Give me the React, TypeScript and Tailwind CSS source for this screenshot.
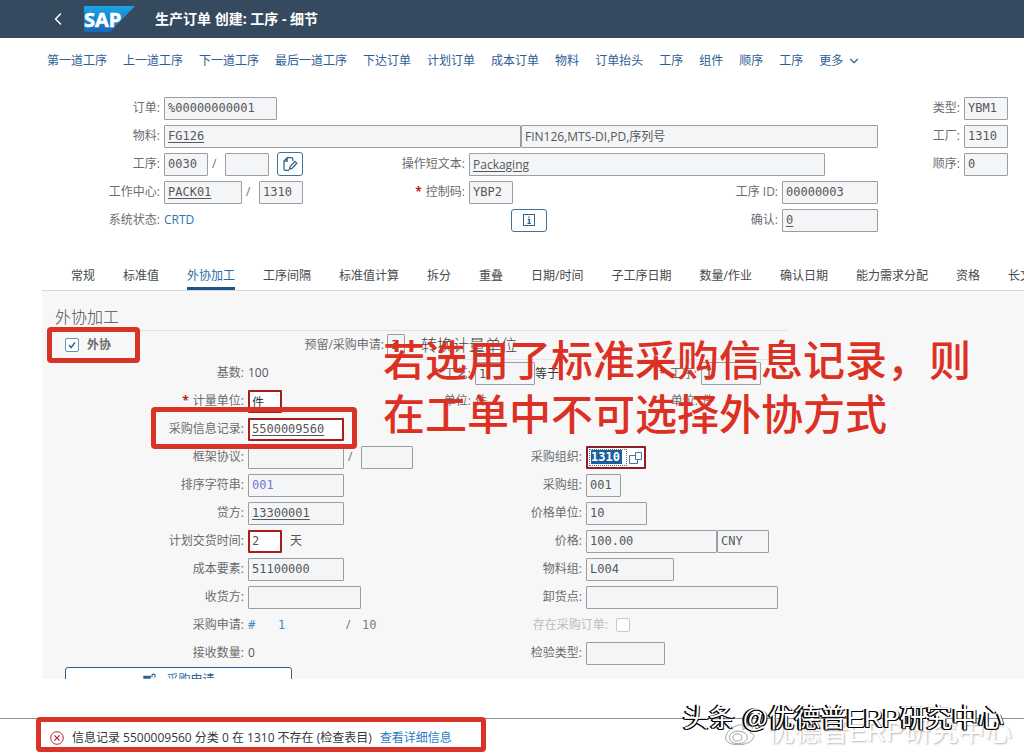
import React from "react";
import { ChevronDown, ChevronLeft } from "lucide-react";

const MENU = [
  "第一道工序", "上一道工序", "下一道工序", "最后一道工序", "下达订单", "计划订单", "成本订单",
  "物料", "订单抬头", "工序", "组件", "顺序", "工序",
];

const TABS = [
  "常规", "标准值", "外协加工", "工序间隔", "标准值计算", "拆分", "重叠", "日期/时间",
  "子工序日期", "数量/作业", "确认日期", "能力需求分配", "资格", "长文本",
];

const MONO = "font-['DejaVu_Sans_Mono','Noto_Sans_CJK_SC',monospace]";

function Label({ id, width, children, required = false, tone = "text-[#6a6d70]" }: {
  id?: string; width: string; children: React.ReactNode; required?: boolean; tone?: string;
}) {
  return (
    <label htmlFor={id} className={`shrink-0 text-right whitespace-nowrap ${width} ${tone}`}>
      {required && <span className="mr-1 font-bold text-[#bb2222]">*</span>}
      {children}:
    </label>
  );
}

function Field({ id, name, value = "", width, link = false, error = false, font = MONO, tone = "text-[#55585b]" }: {
  id?: string; name?: string; value?: string; width: string; link?: boolean; error?: boolean; font?: string; tone?: string;
}) {
  const frame = error ? "border-2 border-[#a81c1c] bg-white px-[2px]" : "border border-[#9a9da1] bg-[#f4f5f6] px-[3px]";
  return (
    <input
      id={id}
      aria-label={name}
      defaultValue={value}
      className={`h-[23px] shrink-0 rounded-[1px] text-xs outline-none ${frame} ${font} ${tone} ${width} ${link ? "underline underline-offset-2" : ""}`}
    />
  );
}

function Cell({ className = "", children }: { className?: string; children?: React.ReactNode }) {
  return <div className={`flex h-7 items-center gap-1 ${className}`}>{children}</div>;
}

function Slash({ width }: { width: string }) {
  return <span className={`shrink-0 text-[#6a6d70] ${width}`}>/</span>;
}

function SapLogo() {
  return (
    <svg viewBox="0 0 51 26" className="h-[26px] w-[51px]" role="img" aria-label="SAP">
      <defs>
        <linearGradient id="sap" x1="0" y1="0" x2="0" y2="1">
          <stop offset="0" stopColor="#19a5e3" />
          <stop offset="1" stopColor="#1668b8" />
        </linearGradient>
      </defs>
      <path d="M0 0H51L26 26H0Z" fill="url(#sap)" />
      <text x="0" y="21" fill="#fff" stroke="#fff" strokeWidth="0.6" fontSize="20" fontWeight="700" fontFamily="Open Sans, sans-serif">SAP</text>
    </svg>
  );
}

function EditIcon() {
  return (
    <svg viewBox="0 0 16 16" className="size-4" fill="none" stroke="currentColor" strokeWidth="1.2">
      <path d="M7 14.3H3.2Q2 14.3 2 13V5L5.2 1.7H9.5Q10.8 1.7 10.8 3V5M2 5.2H5.2V1.7" />
      <path d="M7.5 13.2 8.2 10.6 13 5.4 14.8 7.2 10 12.4Z" />
    </svg>
  );
}

function InfoIcon() {
  return (
    <svg viewBox="0 0 14 14" className="size-3.5" fill="none" stroke="currentColor">
      <rect x="1.5" y="1.5" width="11" height="11" />
      <path d="M7 3.4V4.8M5.8 6.5H7.3V10M5.5 10.3H8.8" strokeWidth="1.3" />
    </svg>
  );
}

function HeaderForm() {
  return (
    <form className="grid shrink-0 grid-cols-[303px_266px_309px_minmax(0,1fr)] pt-3">
      <Cell className="col-span-3">
        <Label id="order" width="w-[160px]">订单</Label>
        <Field id="order" value="%00000000001" width="w-[113px]" />
      </Cell>
      <Cell className="justify-end pr-4">
        <Label id="type" width="w-auto">类型</Label>
        <Field id="type" value="YBM1" width="w-[44px]" />
      </Cell>

      <Cell className="col-span-3">
        <Label id="material" width="w-[160px]">物料</Label>
        <div className="flex flex-1">
          <Field id="material" value="FG126" width="w-1/2" link />
          <Field name="物料描述" value="FIN126,MTS-DI,PD,序列号" width="w-1/2" font="" />
        </div>
      </Cell>
      <Cell className="justify-end pr-4">
        <Label id="plant" width="w-auto">工厂</Label>
        <Field id="plant" value="1310" width="w-[44px]" />
      </Cell>

      <Cell>
        <Label id="op" width="w-[160px]">工序</Label>
        <Field id="op" value="0030" width="w-[44px]" />
        <Slash width="w-[9px]" />
        <Field name="子工序" width="w-[44px]" />
        <button type="button" aria-label="编辑长文本" className="ml-auto flex h-6 w-[26px] items-center justify-center rounded-[3px] border border-[#3f7399] bg-white text-[#2b618c]">
          <EditIcon />
        </button>
      </Cell>
      <Cell className="col-span-2">
        <Label id="short" width="w-[162px]">操作短文本</Label>
        <Field id="short" value="Packaging" width="w-[356px]" font="" link />
      </Cell>
      <Cell className="justify-end pr-4">
        <Label id="seq" width="w-auto">顺序</Label>
        <Field id="seq" value="0" width="w-[44px]" />
      </Cell>

      <Cell>
        <Label id="wc" width="w-[160px]">工作中心</Label>
        <Field id="wc" value="PACK01" width="w-[78px]" link />
        <Slash width="w-[9px]" />
        <Field name="工作中心工厂" value="1310" width="w-[44px]" />
      </Cell>
      <Cell>
        <Label id="ctrl" width="w-[162px]" required>控制码</Label>
        <Field id="ctrl" value="YBP2" width="w-[44px]" />
      </Cell>
      <Cell>
        <Label id="opid" width="w-[209px]">工序 ID</Label>
        <Field id="opid" value="00000003" width="w-[96px]" />
      </Cell>
      <Cell />

      <Cell>
        <Label width="w-[160px]">系统状态</Label>
        <span className="text-[#2f75b0]">CRTD</span>
      </Cell>
      <Cell className="pl-[208px]">
        <button type="button" aria-label="状态信息" className="flex h-[23px] w-9 items-center justify-center rounded-[3px] border border-[#3f7399] bg-white text-[#2b618c]">
          <InfoIcon />
        </button>
      </Cell>
      <Cell>
        <Label id="conf" width="w-[209px]">确认</Label>
        <Field id="conf" value="0" width="w-[96px]" link />
      </Cell>
    </form>
  );
}

function Panel() {
  return (
    <section className="relative ml-[42px] min-h-0 flex-1 overflow-hidden border-t border-[#d5d7d9] bg-[#f7f7f7] pt-3 pl-[13px]">
      <h2 className="mr-[237px] h-7 border-b border-[#e0e1e2] text-base leading-7 font-light text-[#4d5054]">外协加工</h2>

      <div className="flex h-7 items-center pl-[10px]">
        <label className="flex w-[238px] items-center gap-2 font-bold text-[#6a6d70]">
          <span className="grid size-3.5 place-items-center">
            <input type="checkbox" defaultChecked className="col-start-1 row-start-1 size-3.5 appearance-none rounded-[2px] border border-[#6d90ac] bg-white" />
            <svg viewBox="0 0 14 14" className="pointer-events-none col-start-1 row-start-1 size-3.5" fill="none" stroke="#27609a" strokeWidth="1.6">
              <path d="M4 7.2 6.2 9.6 10 4.4" />
            </svg>
          </span>
          外协
        </label>
        <Label id="resv" width="w-[81px]">预留/采购申请</Label>
        <div className="ml-[3px] flex w-[34px]">
          <Field id="resv" value="3" width="w-[18px]" />
        </div>
        <h3 className="text-base font-light text-[#3f4245]">转换计量单位</h3>
      </div>

      <div className="grid grid-cols-[362px_minmax(0,1fr)]">
        <Cell>
          <Label width="w-[189px]">基数</Label>
          <span className="text-[#55585b]">100</span>
        </Cell>
        <Cell className="mr-[237px] border-t border-[#e4e5e6]">
          <Label id="route" width="w-[54px]" required>工艺</Label>
          <div className="flex items-center">
            <Field id="route" value="1" width="w-[60px]" />
            <span className="text-[#32363a]">等于</span>
          </div>
          <Label id="oper" width="w-[134px]" required>工序</Label>
          <Field id="oper" value="1" width="w-[60px]" />
        </Cell>

        <Cell>
          <Label id="uom" width="w-[189px]" required>计量单位</Label>
          <Field id="uom" value="件" width="w-[34px]" error tone="text-[#32363a]" />
        </Cell>
        <Cell>
          <Label width="w-[54px]">单位</Label>
          <span className="text-[#6a6d70]">件</span>
          <Label width="w-[207px]">单位</Label>
          <span className="text-[#6a6d70]">件</span>
        </Cell>

        <Cell>
          <Label id="info" width="w-[189px]">采购信息记录</Label>
          <Field id="info" value="5500009560" width="w-[96px]" error link />
        </Cell>
        <Cell />

        <Cell>
          <Label id="agr" width="w-[189px]">框架协议</Label>
          <Field id="agr" width="w-[96px]" />
          <Slash width="w-[9px]" />
          <Field name="框架协议项目" width="w-[52px]" />
        </Cell>
        <Cell>
          <Label id="porg" width="w-[165px]">采购组织</Label>
          <div className="flex h-[23px] w-[60px] items-center justify-between rounded-[1px] border-2 border-[#8f1f26] bg-white pr-0.5 pl-px">
            <div className="flex h-[17px] w-[38px] items-center border border-dotted border-[#666] pl-px">
              <input id="porg" defaultValue="1310" className={`h-[14px] w-[31px] bg-[#1b5f9e] text-xs font-bold text-white outline-none ${MONO}`} />
            </div>
            <button type="button" aria-label="值帮助" className="text-[#3c78a6]">
              <svg viewBox="0 0 13 13" className="size-[13px]" fill="none" stroke="currentColor">
                <path d="M6.5 1.5H12.5V8.5H6.5ZM6.5 4.5H.5V12.5H8.5V8.5" />
              </svg>
            </button>
          </div>
        </Cell>

        <Cell>
          <Label id="sort" width="w-[189px]">排序字符串</Label>
          <Field id="sort" value="001" width="w-[96px]" tone="text-[#7775d8]" />
        </Cell>
        <Cell>
          <Label id="pgrp" width="w-[165px]">采购组</Label>
          <Field id="pgrp" value="001" width="w-[35px]" />
        </Cell>

        <Cell>
          <Label id="cred" width="w-[189px]">贷方</Label>
          <Field id="cred" value="13300001" width="w-[96px]" link />
        </Cell>
        <Cell>
          <Label id="punit" width="w-[165px]">价格单位</Label>
          <Field id="punit" value="10" width="w-[61px]" />
        </Cell>

        <Cell>
          <Label id="lead" width="w-[189px]">计划交货时间</Label>
          <Field id="lead" value="2" width="w-[34px]" error />
          <span className="pl-1 text-[#55585b]">天</span>
        </Cell>
        <Cell>
          <Label id="price" width="w-[165px]">价格</Label>
          <div className="flex">
            <Field id="price" value="100.00" width="w-[131px]" />
            <Field name="货币" value="CNY" width="w-[52px]" />
          </div>
        </Cell>

        <Cell>
          <Label id="cost" width="w-[189px]">成本要素</Label>
          <Field id="cost" value="51100000" width="w-[96px]" />
        </Cell>
        <Cell>
          <Label id="mgrp" width="w-[165px]">物料组</Label>
          <Field id="mgrp" value="L004" width="w-[88px]" />
        </Cell>

        <Cell>
          <Label id="recv" width="w-[189px]">收货方</Label>
          <Field id="recv" width="w-[113px]" />
        </Cell>
        <Cell>
          <Label id="unload" width="w-[165px]">卸货点</Label>
          <Field id="unload" width="w-[192px]" />
        </Cell>

        <Cell>
          <Label width="w-[189px]">采购申请</Label>
          <a href="#req" className={`flex w-[94px] text-[#3f8bd0] ${MONO}`}>
            <span className="w-[30px]">#</span>1
          </a>
          <Slash width="w-3" />
          <span className={`text-[#7a7d80] ${MONO}`}>10</span>
        </Cell>
        <Cell>
          <Label id="po" width="w-[191px]" tone="text-[#bbbdbf]">存在采购订单</Label>
          <input id="po" type="checkbox" disabled className="ml-1 size-3.5 appearance-none rounded-[2px] border border-[#c8cacc] bg-white" />
        </Cell>

        <Cell>
          <Label width="w-[189px]">接收数量</Label>
          <span className="text-[#55585b]">0</span>
        </Cell>
        <Cell>
          <Label id="insp" width="w-[165px]">检验类型</Label>
          <Field id="insp" width="w-[79px]" />
        </Cell>
      </div>

      <button type="button" className="ml-[10px] flex h-[26px] w-[227px] items-center justify-center gap-2 rounded-[3px] border border-[#2b618c] bg-white text-[#27608f]">
        <svg viewBox="0 0 16 16" className="size-4" fill="none" stroke="currentColor" strokeWidth="1.4">
          <path d="M2 4.5H4.5V6H2ZM6 4.5H8V6H6ZM2 9V13H8V9" />
          <path d="M10 5.5V2.8Q11.5 1.4 13 2.8V5.5M9.5 13V8.5Q12 6 14.5 8.5V13" strokeWidth="1.1" />
        </svg>
        采购申请
      </button>

      <div className="pointer-events-none absolute top-[36px] left-[5px] h-9 w-[93px] rounded-[4px] border-[5px] border-[#d93226]" />
      <div className="pointer-events-none absolute top-[116px] left-[109px] h-[42px] w-[206px] rounded-[4px] border-[5px] border-[#d93226]" />
      <p className="pointer-events-none absolute top-[42px] left-[341px] text-[42px] leading-[54px] font-medium whitespace-nowrap text-[#dc3023]">
        若选用了标准采购信息记录，则
        <br />
        在工单中不可选择外协方式
      </p>
    </section>
  );
}

function Footer() {
  return (
    <footer className="relative shrink-0 pt-[39px]">
      <div className="flex h-[34px] items-center gap-2 border-t border-[#8d8f91] pt-1 pl-[50px] text-[#32363a]">
        <svg viewBox="0 0 14 14" className="size-3.5" fill="none" stroke="#b3272d">
          <circle cx="7" cy="7" r="6.3" />
          <path d="M4.4 4.4 9.6 9.6M9.6 4.4 4.4 9.6" strokeWidth="1.2" />
        </svg>
        <span className="whitespace-nowrap">信息记录 5500009560 分类 0 在 1310 不存在 (检查表目)</span>
        <a href="#details" className="text-[#2a7bc4]">查看详细信息</a>
      </div>
      <div className="pointer-events-none absolute bottom-0 left-9 h-[35px] w-[450px] rounded-[4px] border-[5px] border-[#d93226]" />
      <div className="pointer-events-none absolute right-3 bottom-1 flex items-center gap-2 font-['Liberation_Sans','Noto_Sans_CJK_SC',sans-serif] text-[27px] leading-8 whitespace-nowrap text-white [text-shadow:1px_1px_2px_#b5b5b5]">
        <svg viewBox="0 0 40 34" className="h-8 w-9" fill="#fff" stroke="#999">
          <path d="M15 10C7 13 2 20 3 25C6 34 31 33 34 23C35 20 33 18 30 18C32 13 27 12 22 14C23 9 20 8 15 10Z" />
          <ellipse cx="17" cy="23" rx="10" ry="7" />
          <ellipse cx="16" cy="23" rx="5" ry="4" />
          <path d="M27 6Q36 4 37 14M28 10Q32 9 33 14" fill="none" />
        </svg>
        优德普ERP研究中心
      </div>
      <div className="pointer-events-none absolute right-5 bottom-[18px] font-['Liberation_Sans','Noto_Sans_CJK_SC',sans-serif] text-[26px] leading-8 whitespace-nowrap text-white [text-shadow:-2px_0_0_#000,-1px_1px_0_#000,1px_1px_0_#000]">
        头条 @优德普ERP研究中心
      </div>
    </footer>
  );
}

export default function App() {
  return (
    <div className="flex h-screen flex-col overflow-hidden bg-white font-['Open_Sans','Noto_Sans_CJK_SC',sans-serif] text-xs">
      <header className="flex h-[38px] shrink-0 items-center bg-[#354a5f] pl-[48px] text-white">
        <button type="button" aria-label="返回" className="mr-4">
          <ChevronLeft className="size-5" strokeWidth={1.8} />
        </button>
        <SapLogo />
        <h1 className="ml-5 text-sm font-bold">生产订单 创建: 工序 - 细节</h1>
      </header>

      <nav className="flex h-11 shrink-0 items-center gap-4 pt-px pl-[47px] whitespace-nowrap text-[#2c6094]">
        {MENU.map((item, i) => (
          <a key={i} href="#menu">{item}</a>
        ))}
        <button type="button" className="flex items-center gap-1">
          更多
          <ChevronDown className="size-3.5" strokeWidth={2} />
        </button>
      </nav>

      <HeaderForm />

      <div role="tablist" className="mt-7 ml-[42px] flex h-7 shrink-0 gap-7 overflow-hidden pl-[29px] whitespace-nowrap text-[#45484c]">
        {TABS.map((tab) => (
          <button
            key={tab}
            type="button"
            role="tab"
            aria-selected={tab === "外协加工"}
            className={tab === "外协加工" ? "shrink-0 border-b-[3px] border-[#1f5582] pt-[3px] text-[#2a6ba6]" : "shrink-0"}
          >
            {tab}
          </button>
        ))}
      </div>

      <Panel />
      <Footer />
    </div>
  );
}
